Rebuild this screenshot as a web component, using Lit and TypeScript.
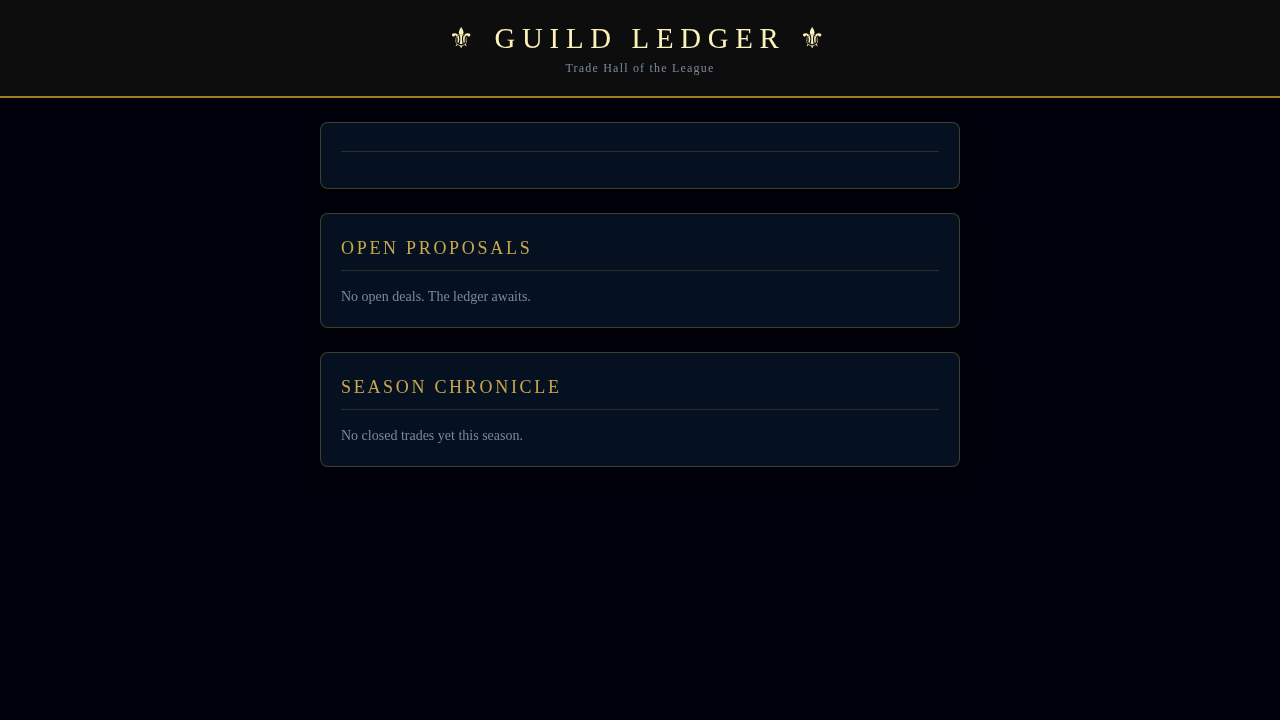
import { LitElement, html, css } from "lit";
import { customElement } from "lit/decorators.js";

@customElement("app-root")
export class AppRoot extends LitElement {
  static styles = css`
    :host {
      display: block;
      min-height: 720px;
      background: #00000c;
      font-family: "Liberation Serif", serif;
      color: #8899aa;
    }
    header {
      background: #0d0d0d;
      border-bottom: 2px solid #a67c1e;
      padding: 20px 0;
      text-align: center;
    }
    h1, .sub, h2, p {
      will-change: transform;
    }
    h1 {
      margin: 0;
      font-size: 28.8px;
      line-height: 36px;
      font-weight: 400;
      letter-spacing: 6.7px;
      color: #fdf2bc;
    }
    .glyph {
      font-family: "DejaVu Sans", sans-serif;
      font-weight: 700;
    }
    .sub {
      margin-top: 4px;
      font-size: 12px;
      line-height: 16px;
      letter-spacing: 0.1em;
      color: #7a8a9a;
    }
    main {
      width: 640px;
      margin: 0 auto;
      padding-top: 24px;
      display: flex;
      flex-direction: column;
      gap: 24px;
    }
    .card {
      background: #051121;
      border: 1px solid rgba(201, 168, 76, 0.3);
      border-radius: 8px;
      padding: 20px;
      box-shadow: 0 4px 24px rgba(0, 0, 0, 0.6);
    }
    h2 {
      margin: 0 0 16px;
      padding-bottom: 8px;
      border-bottom: 1px solid rgba(201, 168, 76, 0.2);
      font-size: 18px;
      line-height: 28px;
      font-weight: 400;
      letter-spacing: 0.15em;
      color: #c9a84c;
    }
    p {
      margin: 0;
      font-size: 14px;
      line-height: 20px;
      color: #7a8a9a;
    }
  `;
  render() {
    return html`
      <header>
        <h1><span class="glyph">⚜</span> GUILD LEDGER <span class="glyph">⚜</span></h1>
        <div class="sub">Trade Hall of the League</div>
      </header>
      <main>
        <section class="card"><h2></h2></section>
        <section class="card">
          <h2>OPEN PROPOSALS</h2>
          <p>No open deals. The ledger awaits.</p>
        </section>
        <section class="card">
          <h2>SEASON CHRONICLE</h2>
          <p>No closed trades yet this season.</p>
        </section>
      </main>
    `;
  }
}
